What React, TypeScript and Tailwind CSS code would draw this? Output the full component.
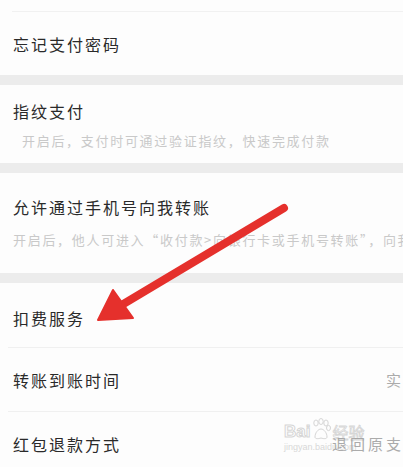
import React from "react";

const font = { fontFamily: '"Noto Sans CJK SC", "Noto Sans", sans-serif' };

function Band() {
  return <div className="h-[10px] bg-[#ececec]" />;
}

export default function App() {
  return (
    <div className="relative w-[403px] h-[467px] overflow-hidden bg-[#fdfdfd]" style={font}>
      <div className="w-[470px]">
        <div className="h-[11px]" />
        <div className="ml-3 h-px bg-[#f1f1f1]" />
        <div className="flex h-[63px] items-center px-[13px] text-[16px] leading-6 tracking-[2px] text-[#2a2a2a]">
          忘记支付密码
        </div>
        <Band />
        <div className="px-[13px] pt-[14px] pb-[12px] h-[78px]">
          <div className="text-[16px] leading-6 tracking-[2px] text-[#2a2a2a]">指纹支付</div>
          <div className="mt-[8px] pl-[9px] text-[13px] leading-5 tracking-[1.7px] text-[#c9c9c9] whitespace-nowrap">
            开启后，支付时可通过验证指纹，快速完成付款
          </div>
        </div>
        <Band />
        <div className="px-[13px] pt-[22px] h-[100px]">
          <div className="text-[16px] leading-6 tracking-[2px] text-[#2a2a2a]">允许通过手机号向我转账</div>
          <div className="mt-[11px] text-[13px] leading-5 tracking-[1.7px] text-[#c9c9c9] whitespace-nowrap">
            开启后，他人可进入“收付款&gt;向银行卡或手机号转账”，向我转账
          </div>
        </div>
        <Band />
        <div className="flex h-[64px] items-start px-[13px] pt-[23px] text-[16px] leading-6 tracking-[2px] text-[#2a2a2a]">
          扣费服务
        </div>
        <div className="ml-2 h-px bg-[#f0f0f0]" />
        <div className="flex h-[63px] items-center justify-between px-[13px] pr-[12px]">
          <span className="text-[16px] leading-6 tracking-[2px] text-[#2a2a2a]">转账到账时间</span>
          <span className="text-[15px] leading-6 tracking-[3px] text-[#ababab]">实时到账</span>
        </div>
        <div className="ml-2 h-px bg-[#f0f0f0]" />
        <div className="flex h-[63px] items-center justify-between px-[13px] pr-[12px]">
          <span className="text-[16px] leading-6 tracking-[2px] text-[#2a2a2a]">红包退款方式</span>
          <span className="text-[15px] leading-6 tracking-[3px] text-[#ababab]">退回原支付方式</span>
        </div>
      </div>

      {/* watermark */}
      <div className="absolute left-[284px] top-[418px] opacity-40 pointer-events-none">
        <div className="flex items-end">
          <span className="text-[17px] font-bold leading-none text-white" style={{ WebkitTextStroke: "1px #9a9a9a", fontFamily: '"Liberation Sans", sans-serif' }}>Bai</span>
          <svg width="20" height="22" viewBox="0 0 20 22" className="mx-[1px]">
            <g fill="none" stroke="#9a9a9a" strokeWidth="1">
              <ellipse cx="5" cy="5" rx="2.2" ry="3" />
              <ellipse cx="10" cy="3.5" rx="2.2" ry="3" />
              <ellipse cx="15" cy="5" rx="2.2" ry="3" />
              <ellipse cx="17.5" cy="10" rx="2" ry="2.6" />
              <path d="M4 19c0-4 3-8 6-8s6 4 6 8c0 2-3 2-6 1-3 1-6 1-6-1z" />
            </g>
          </svg>
          <span className="text-[16px] leading-none text-white" style={{ WebkitTextStroke: "0.8px #9a9a9a" }}>经验</span>
        </div>
        <div className="text-[9px] leading-none mt-[3px] text-[#a0a0a0]" style={{ fontFamily: '"Liberation Sans", sans-serif' }}>jingyan.baidu.com</div>
      </div>

      {/* arrow */}
      <svg className="absolute left-0 top-0 pointer-events-none" width="403" height="467" viewBox="0 0 403 467">
        <line x1="284" y1="208" x2="120" y2="306" stroke="#e5302c" strokeWidth="8" strokeLinecap="round" />
        <polygon points="98,320 113,290 133,318" fill="#e5302c" stroke="#e5302c" strokeWidth="2" strokeLinejoin="round" />
      </svg>
    </div>
  );
}
